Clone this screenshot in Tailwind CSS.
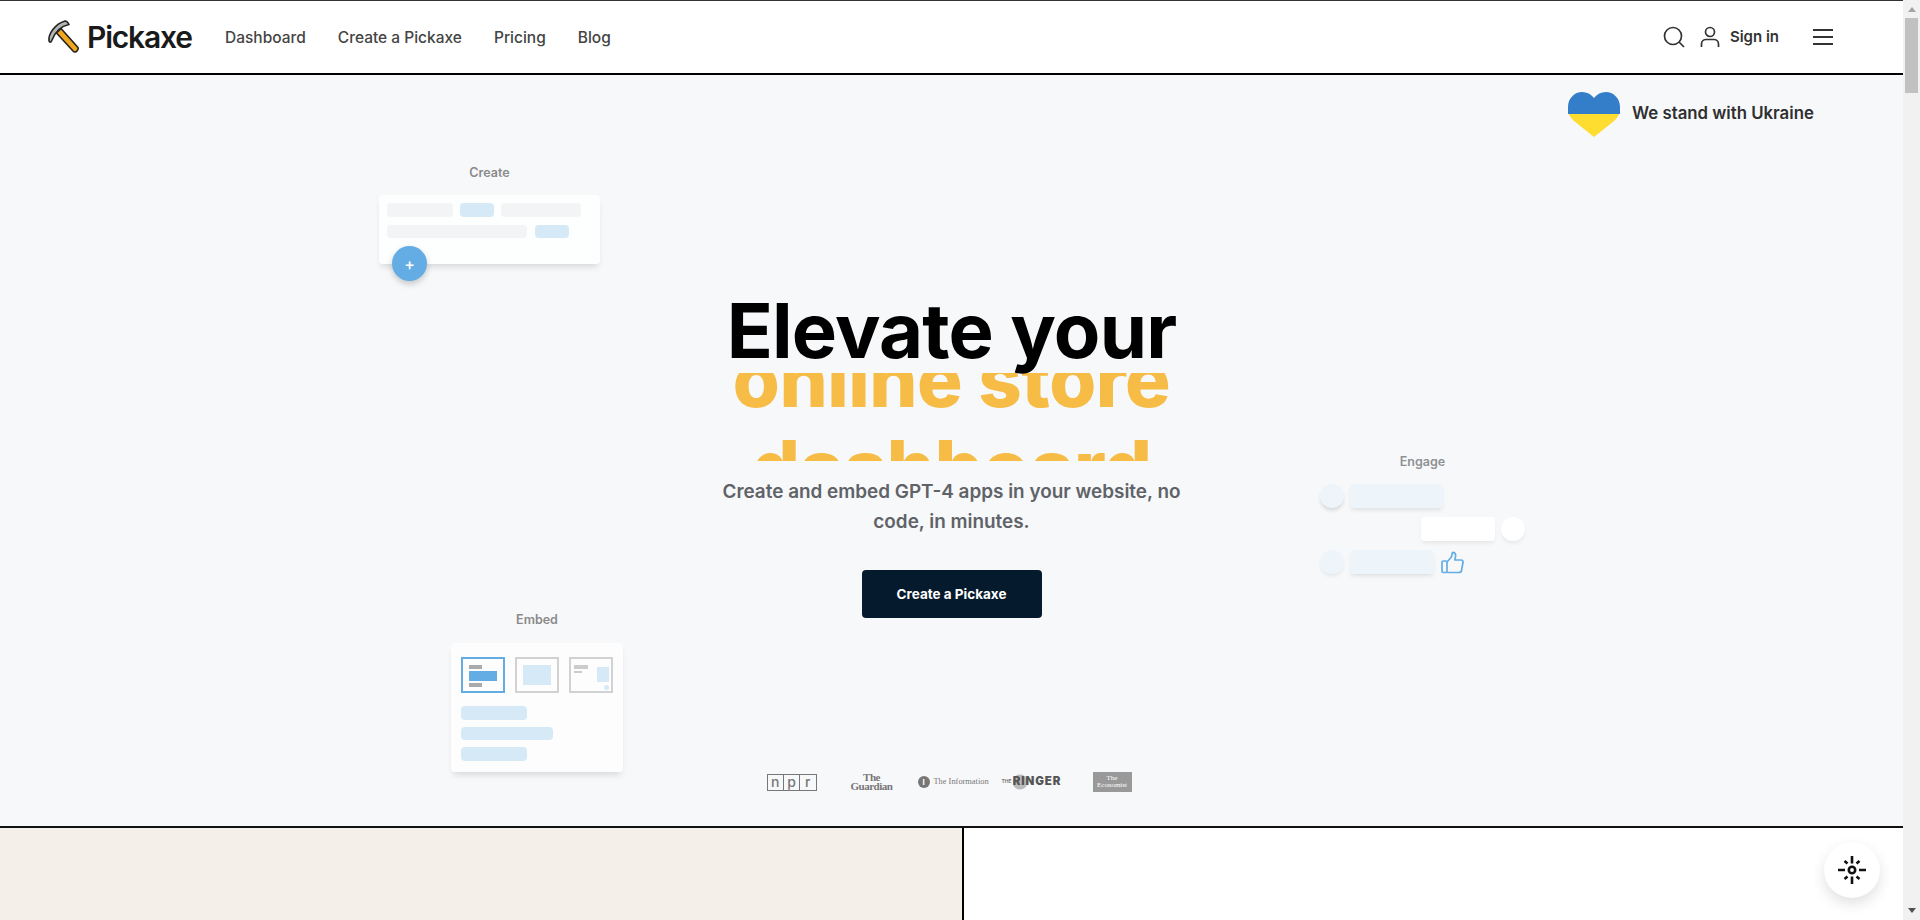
<!DOCTYPE html>
<html lang="en">
<head>
    <meta charset="UTF-8">
    <meta name="viewport" content="width=device-width, initial-scale=1.0">
    <title>Pickaxe</title>
    <script src="https://cdn.jsdelivr.net/npm/@tailwindcss/browser@4"></script>
</head>
<body class="bg-white text-[#222] font-['Inter',sans-serif]">
<div class="flex h-[920px] w-[1920px] overflow-hidden">

    <div class="w-[1903px] shrink-0 flex flex-col relative">
        <div class="h-px bg-[#333]"></div>

        <!-- Navbar -->
        <header class="h-[74px] border-b-2 border-black flex items-center pl-[46px] pr-[70px] bg-white">
            <div class="flex items-center w-[179px]">
                <svg class="w-[34px] h-[34px] shrink-0" viewBox="0 0 34 34" fill="none">
                    <path d="M3 21C2 14 9 4 19 1C20.500 1 22 2.500 23 4.500C15 6 9 12 5.500 21C5 22.500 3.500 22.500 3 21Z" fill="#b4b4b4" stroke="#222" stroke-width="1.600" stroke-linejoin="round"/>
                    <path d="M10.500 13L15 8.500L32 27.500C33 29 30.500 32.500 28.500 32C28 32 27.500 31.500 27 31Z" fill="#f0a71e" stroke="#222" stroke-width="1.600" stroke-linejoin="round"/>
                </svg>
                <span class="ml-[7px] text-[30px] leading-none font-semibold tracking-[-1.2px] text-[#1a1a1a]">Pickaxe</span>
            </div>
            <nav class="flex gap-[32px] text-[15.5px] font-medium text-[#444] pt-px">
                <a>Dashboard</a>
                <a>Create a Pickaxe</a>
                <a>Pricing</a>
                <a>Blog</a>
            </nav>
            <div class="ml-auto flex items-center">
                <svg class="w-[22px] h-[22px]" viewBox="0 0 22 22" fill="none" stroke="#333" stroke-width="1.7"><circle cx="10" cy="10" r="8.500"/><path d="M16 16L21 21"/></svg>
                <svg class="w-[20px] h-[22px] ml-[15px]" viewBox="0 0 20 22" fill="none" stroke="#333" stroke-width="1.7"><circle cx="10" cy="6" r="4.500"/><path d="M1.500 21V18C1.500 15 4 13.500 6 13.500H14C16 13.500 18.500 15 18.500 18V21"/></svg>
                <span class="ml-[10px] text-[15px] font-semibold text-[#333] pt-px">Sign in</span>
                <div class="ml-[34px] w-[20px] flex flex-col gap-[5px]">
                    <div class="h-[2px] bg-[#333]"></div>
                    <div class="h-[2px] bg-[#333]"></div>
                    <div class="h-[2px] bg-[#333]"></div>
                </div>
            </div>
        </header>

        <!-- Hero -->
        <main class="relative h-[753px] bg-[#f7f8fa] border-b-2 border-[#111] flex flex-col items-center pt-[211px]">
            <h1 class="text-[76px] leading-[88px] font-bold tracking-[-0.8px] text-black relative z-10">Elevate your</h1>
            <div class="h-[88px] -mt-px overflow-hidden text-center text-[76px] leading-[88px] font-extrabold tracking-[-0.5px] text-[#f6bc45]">
                <div class="-mt-[38px]">online store</div>
                <div>dashboard</div>
            </div>
            <p class="mt-[16px] w-[470px] text-center text-[18.9px] leading-[30px] font-semibold text-[#5f6368]">Create and embed GPT-4 apps in your website, no code, in minutes.</p>
            <button class="mt-[33px] w-[180px] h-[48px] rounded bg-[#051a2c] text-white text-[13.5px] font-bold">Create a Pickaxe</button>

            <!-- Press logos -->
            <div class="mt-[152px] mr-[5px] flex items-center h-[24px] text-[#777]">
                <div class="flex w-[50px] h-[17px] border border-[#777] text-[14px] leading-[13px] text-center font-medium">
                    <span class="flex-1 border-r border-[#777]">n</span>
                    <span class="flex-1 border-r border-[#777]">p</span>
                    <span class="flex-1">r</span>
                </div>
                <div class="ml-[34px] w-[42px] text-center text-[11px] leading-[9px] font-bold font-['Liberation_Serif',serif] tracking-[-0.5px]">The<br>Guardian</div>
                <div class="ml-[25px] w-[12px] h-[12px] rounded-full bg-[#777] text-white text-[8px] leading-[12px] text-center font-bold">I</div>
                <div class="ml-[4px] w-[52px] text-[8.4px] font-['Liberation_Serif',serif] whitespace-nowrap">The Information</div>
                <div class="ml-[16px] w-[59px] flex items-center whitespace-nowrap">
                    <span class="text-[5px] font-bold">THE</span>
                    <span class="ml-px text-[11.5px] font-black tracking-[0.9px] text-[#555] bg-[radial-gradient(circle_at_7px_50%,#bbb_7px,transparent_8px)]">RINGER</span>
                </div>
                <div class="ml-[32px] w-[39px] h-[20px] bg-[#999] text-white text-center text-[7px] leading-[7px] pt-[3px] font-['Liberation_Serif',serif]">The<br>Economist</div>
            </div>

            <!-- Ukraine -->
            <div class="absolute left-[1568px] top-[17px] flex items-center">
                <svg class="w-[52px] h-[45px]" viewBox="0 0 52 45">
                    <path d="M0 22V15C0 6 7 0 14 0C19 0 23 2 26 6C29 2 33 0 38 0C45 0 52 6 52 15V22Z" fill="#347dc8"/>
                    <path d="M1 22H51C50 25 48 27 46 29L26 45L6 29C4 27 2 25 1 22Z" fill="#ffdc30"/>
                </svg>
                <span class="ml-[12px] -mt-[2px] text-[16.8px] font-semibold text-[#2f2f2f]">We stand with Ukraine</span>
            </div>

            <!-- Create card -->
            <div class="absolute left-[379px] top-[89px] w-[221px]">
                <div class="text-center text-[12.5px] font-semibold text-[#8a8a8a] leading-[18px]">Create</div>
                <div class="relative mt-[13px] h-[69px] rounded bg-white/80 shadow-[0_5px_6px_-2px_rgba(0,0,0,0.12)] p-[8px] flex flex-col gap-[8px]">
                    <div class="flex gap-[7px]">
                        <div class="w-[66px] h-[14px] rounded-sm bg-[#f3f4f6]"></div>
                        <div class="w-[34px] h-[14px] rounded-sm bg-[#d6e9f7]"></div>
                        <div class="w-[80px] h-[14px] rounded-sm bg-[#f3f4f6]"></div>
                    </div>
                    <div class="flex gap-[8px]">
                        <div class="w-[140px] h-[13px] rounded-sm bg-[#f3f4f6]"></div>
                        <div class="w-[34px] h-[13px] rounded-sm bg-[#d6e9f7]"></div>
                    </div>
                    <div class="absolute left-[13px] top-[51px] w-[35px] h-[35px] rounded-full bg-[#64ade4] text-white text-[16px] font-medium flex items-center justify-center shadow-[0_3px_6px_rgba(0,0,0,0.2)]">+</div>
                </div>
            </div>

            <!-- Engage card -->
            <div class="absolute left-[1320px] top-[378px] w-[205px]">
                <div class="text-center text-[12.5px] font-semibold text-[#8f9194] leading-[18px]">Engage</div>
                <div class="mt-[13px] flex flex-col gap-[9px]">
                    <div class="flex gap-[6px]">
                        <div class="w-[24px] h-[24px] rounded-full bg-[#edf4fa] shadow-[0_3px_4px_-1px_rgba(0,0,0,0.16)]"></div>
                        <div class="w-[93px] h-[24px] rounded bg-[#edf4fa] shadow-[0_3px_4px_-1px_rgba(0,0,0,0.1)]"></div>
                    </div>
                    <div class="flex gap-[6px] justify-end">
                        <div class="w-[74px] h-[24px] rounded bg-white shadow-[0_3px_4px_-1px_rgba(0,0,0,0.08)]"></div>
                        <div class="w-[24px] h-[24px] rounded-full bg-white shadow-[0_3px_4px_-1px_rgba(0,0,0,0.08)]"></div>
                    </div>
                    <div class="flex gap-[6px] items-center">
                        <div class="w-[24px] h-[24px] rounded-full bg-[#edf4fa] shadow-[0_3px_4px_-1px_rgba(0,0,0,0.08)]"></div>
                        <div class="w-[84px] h-[24px] rounded bg-[#edf4fa] shadow-[0_3px_4px_-1px_rgba(0,0,0,0.1)]"></div>
                        <svg class="w-[23px] h-[23px] ml-px" viewBox="0 0 23 23" fill="none" stroke="#64ade4" stroke-width="1.700" stroke-linejoin="round">
                            <rect x="1" y="10" width="5" height="11.500" rx="1.200"/>
                            <path d="M6 11L10 6.500C11 5 11 3 11.500 1.500C13.500 1 15 3 14.500 5.500L13.800 9H20C21.500 9 22.200 10 22 11.500L20.500 19.500C20.300 20.800 19.500 21.500 18 21.500H6"/>
                        </svg>
                    </div>
                </div>
            </div>

            <!-- Embed card -->
            <div class="absolute left-[451px] top-[536px] w-[172px]">
                <div class="text-center text-[12.5px] font-semibold text-[#8a8a8a] leading-[18px]">Embed</div>
                <div class="mt-[14px] h-[129px] rounded bg-white/70 shadow-[0_5px_6px_-2px_rgba(0,0,0,0.12)] pt-[14px] pl-[10px]">
                    <div class="flex gap-[10px]">
                        <div class="w-[44px] h-[36px] border-2 border-[#64ade4] pl-[6px] pt-[6px] flex flex-col gap-[2px]">
                            <div class="w-[13px] h-[4px] bg-[#aaa]"></div>
                            <div class="w-[28px] h-[10px] bg-[#64ade4]"></div>
                            <div class="w-[13px] h-[4px] bg-[#aaa]"></div>
                        </div>
                        <div class="w-[44px] h-[36px] border-2 border-[#d2d2d2] p-[6px]">
                            <div class="w-full h-full bg-[#d6e9f7]"></div>
                        </div>
                        <div class="relative w-[44px] h-[36px] border-2 border-[#d2d2d2]">
                            <div class="absolute left-[3px] top-[6px] w-[14px] h-[4px] bg-[#ccc]"></div>
                            <div class="absolute left-[3px] top-[12px] w-[8px] h-[2px] bg-[#ccc]"></div>
                            <div class="absolute left-[26px] top-[8px] w-[12px] h-[15px] bg-[#d6e9f7]"></div>
                            <div class="absolute left-[33px] top-[26px] w-[5px] h-[5px] rounded-full bg-[#d6e9f7]"></div>
                        </div>
                    </div>
                    <div class="mt-[13px] flex flex-col gap-[7px]">
                        <div class="w-[66px] h-[14px] rounded-sm bg-[#d6e9f7]"></div>
                        <div class="w-[92px] h-[13px] rounded-sm bg-[#d6e9f7]"></div>
                        <div class="w-[66px] h-[14px] rounded-sm bg-[#d6e9f7]"></div>
                    </div>
                </div>
            </div>
        </main>

        <!-- Bottom split -->
        <div class="flex-1 flex">
            <div class="w-[964px] bg-[#f4efe8] border-r-2 border-black"></div>
            <div class="flex-1 bg-white"></div>
        </div>

        <!-- Chat button -->
        <div class="absolute left-[1824px] top-[842px] w-[56px] h-[56px] rounded-full bg-white shadow-[0_6px_14px_rgba(0,0,0,0.12)] flex items-center justify-center">
            <svg class="w-[28px] h-[28px]" viewBox="0 0 28 28" fill="none" stroke="#111" stroke-width="2.600">
                <circle cx="14" cy="14" r="3.200"/>
                <path d="M14 0V7.500M14 20.500V28M0 14H7M21 14H28M6.500 5L9.500 7.500M21.500 5L18.500 7.500M6.500 23L9.500 20.500M21.500 23L18.500 20.500"/>
            </svg>
        </div>
    </div>

    <!-- Scrollbar -->
    <aside class="w-[17px] bg-[#f1f1f1] flex flex-col items-center">
        <div class="mt-[7px] w-0 h-0 border-x-[4px] border-x-transparent border-b-[5px] border-b-[#a3a3a3]"></div>
        <div class="mt-[6px] w-[13px] h-[75px] bg-[#c1c1c1]"></div>
        <div class="mt-auto mb-[7px] w-0 h-0 border-x-[4px] border-x-transparent border-t-[5px] border-t-[#505050]"></div>
    </aside>
</div>
</body>
</html>
